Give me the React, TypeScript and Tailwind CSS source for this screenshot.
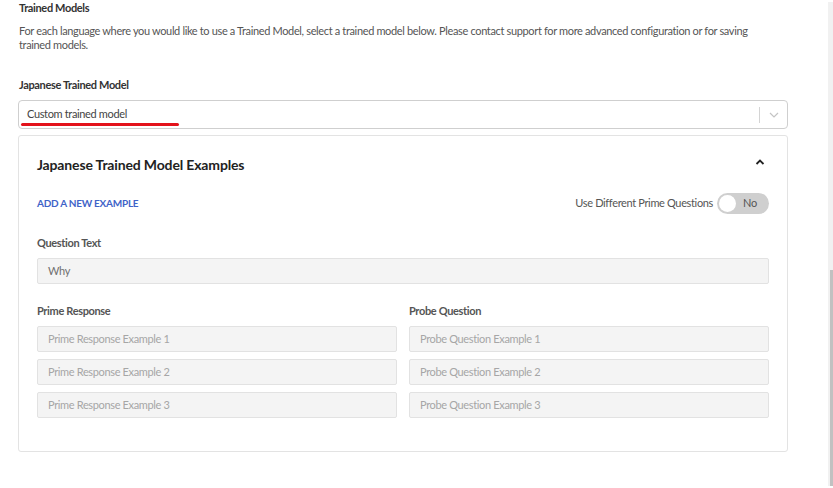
import React from "react";

const PRIME = ["Prime Response Example 1", "Prime Response Example 2", "Prime Response Example 3"];
const PROBE = ["Probe Question Example 1", "Probe Question Example 2", "Probe Question Example 3"];

const Field: React.FC<{ text: string; filled?: boolean }> = ({ text, filled }) => (
  <div
    className={`h-[26px] flex items-center px-[10px] bg-[#f4f4f4] border border-[#e2e2e2] rounded-[2px] text-[11px] ${
      filled ? "text-[#707070]" : "text-[#a6a6a6]"
    }`}
  >
    {text}
  </div>
);

const App: React.FC = () => {
  return (
    <div
      className="flex w-[833px] h-[488px] bg-white overflow-hidden tracking-[-0.35px]"
      style={{ fontFamily: "Lato, 'Noto Sans', sans-serif" }}
    >
      {/* main column */}
      <div className="flex-1 pl-[18px] pr-[40px] pt-[1px]">
        <div className="pl-[1px] text-[11px] leading-[14px] font-bold text-[#333]">Trained Models</div>
        <p className="mt-[9px] pl-[1px] text-[11px] leading-[14px] text-[#555] whitespace-nowrap">
          For each language where you would like to use a Trained Model, select a trained model below. Please contact support for more advanced configuration or for saving
          <br />
          trained models.
        </p>

        <div className="mt-[26px] pl-[1px] text-[11px] leading-[14px] font-bold text-[#333]">Japanese Trained Model</div>

        {/* select */}
        <div className="relative mt-[8px] h-[29px] flex items-center border border-[#cfcfcf] rounded-[4px] bg-white">
          <span className="flex-1 pl-[8px] text-[11px] text-[#444]">Custom trained model</span>
          <span className="w-px h-[16px] bg-[#d4d4d4]" />
          <span className="w-[27px] flex justify-center">
            <svg width="10" height="6" viewBox="0 0 10 6" fill="none">
              <path d="M1 1l4 4 4-4" stroke="#c4c4c4" strokeWidth="1.2" />
            </svg>
          </span>
          {/* red annotation underline */}
          <span className="absolute left-[2px] top-[22px] w-[158px] h-[3px] rounded-full bg-[#e3121b]" />
        </div>

        {/* card */}
        <div className="mt-[6px] border border-[#e3e3e3] rounded-[3px] px-[18px] pt-[18px] pb-[33px]">
          <div className="flex items-center justify-between h-[20px]">
            <h2 className="text-[14px] font-bold text-[#222] tracking-[-0.15px]">Japanese Trained Model Examples</h2>
            <svg width="10" height="6" viewBox="0 0 10 6" fill="none" className="mr-[4px] mb-[4px]">
              <path d="M1.5 5l3.5-3.5L8.5 5" stroke="#222" strokeWidth="1.8" />
            </svg>
          </div>

          <div className="mt-[19px] flex items-center justify-between h-[20px]">
            <span className="text-[10px] font-bold tracking-[-0.25px] text-[#3f63c8]">ADD A NEW EXAMPLE</span>
            <div className="flex items-center gap-[4px]">
              <span className="text-[11px] text-[#555]">Use Different Prime Questions</span>
              <div className="w-[52px] h-[21px] rounded-full bg-[#cfcfcf] flex items-center pl-[2px]">
                <span className="w-[17px] h-[17px] rounded-full bg-white" />
                <span className="ml-[7px] text-[11px] text-[#555]">No</span>
              </div>
            </div>
          </div>

          <div className="mt-[23px] text-[11px] leading-[14px] font-bold text-[#555]">Question Text</div>
          <div className="mt-[8px]">
            <Field text="Why" filled />
          </div>

          <div className="mt-[20px] grid grid-cols-2 gap-x-[12px]">
            <div>
              <div className="text-[11px] leading-[14px] font-bold text-[#555]">Prime Response</div>
              <div className="mt-[8px] flex flex-col gap-[7px]">
                {PRIME.map((t) => (
                  <Field key={t} text={t} />
                ))}
              </div>
            </div>
            <div>
              <div className="text-[11px] leading-[14px] font-bold text-[#555]">Probe Question</div>
              <div className="mt-[8px] flex flex-col gap-[7px]">
                {PROBE.map((t) => (
                  <Field key={t} text={t} />
                ))}
              </div>
            </div>
          </div>
        </div>
      </div>

      {/* scrollbar */}
      <div className="w-[5px] my-[2px] bg-[#f1f1f1] flex flex-col justify-end">
        <div className="ml-[2px] h-[216px] bg-[#c1c1c1]" />
      </div>
    </div>
  );
};

export default App;
